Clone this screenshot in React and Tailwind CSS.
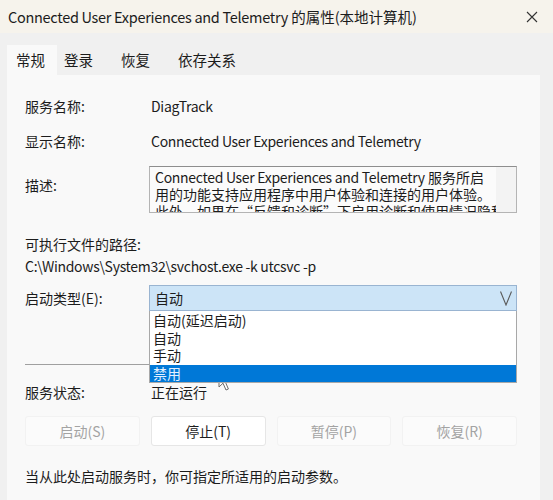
import React from 'react';

const FONT = "font-['Noto_Sans_CJK_SC','Noto_Sans',sans-serif]";
// Latin runs a touch narrower, closer to Segoe UI widths
const LATIN = 'tracking-[-0.3px]';

const TABS = ['常规', '登录', '恢复', '依存关系'];
const OPTIONS = ['自动(延迟启动)', '自动', '手动', '禁用'];
const BUTTONS = [
  { label: '启动(S)', enabled: false },
  { label: '停止(T)', enabled: true },
  { label: '暂停(P)', enabled: false },
  { label: '恢复(R)', enabled: false },
];

function Row({ label, children }) {
  return (
    <div className="flex h-[24px] items-center">
      <div className="w-[125px] shrink-0">{label}</div>
      <div className="pl-[1px]">{children}</div>
    </div>
  );
}

function Cursor() {
  return (
    <svg className="absolute left-[218px] top-[370px]" width="14" height="22" viewBox="0 0 14 22">
      <path d="M1 1 L1 17 L5 13.2 L8 20 L10.4 19 L7.5 12.3 L12.6 12.3 Z" fill="#ffffff" stroke="#6b6b6b" strokeWidth="1" strokeLinejoin="round" />
    </svg>
  );
}

export default function App() {
  return (
    <div className={`relative w-[553px] h-[500px] overflow-hidden bg-[#f0f0f0] text-[14px] text-[#1c1c1c] ${FONT}`}>
      {/* title bar */}
      <div className="flex h-[33px] items-center justify-between bg-[#f6f3ec] pl-[8px] pr-[15px]">
        <span className="whitespace-nowrap text-[14.5px]">
          <span className={LATIN}>Connected User Experiences and Telemetry</span> 的属性(本地计算机)
        </span>
        <svg width="12" height="12" viewBox="0 0 12 12">
          <path d="M1 1 L11 11 M11 1 L1 11" stroke="#333" strokeWidth="1.1" />
        </svg>
      </div>

      {/* tabs */}
      <div className="flex h-[42px] items-end pl-[7px]">
        {TABS.map((t, i) => (
          <div
            key={t}
            className={`flex h-[30px] items-center text-[14.5px] ${
              i === 0 ? 'bg-[#f9f9f9] pl-[9px] pr-[12px]' : 'pl-[7px] pr-[21px]'
            }`}
          >
            {t}
          </div>
        ))}
      </div>

      {/* panel */}
      <div className="ml-[7px] h-[425px] w-[533px] bg-[#f9f9f9] pl-[18px] pr-[23px]">
        <div className="h-[19px]" />
        <Row label="服务名称:"><span className={LATIN}>DiagTrack</span></Row>
        <div className="mt-[11px]">
          <Row label="显示名称:"><span className={LATIN}>Connected User Experiences and Telemetry</span></Row>
        </div>

        <div className="mt-[13px] flex">
          <div className="w-[124px] shrink-0 pt-[9px] leading-[20px]">描述:</div>
          <div className="flex h-[47px] flex-1 overflow-hidden border border-[#b4b4b4] border-t-[#8e8e8e] bg-[#fbfbfb]">
            <div className="flex-1 overflow-hidden pl-[5px] pt-[2px] leading-[17px] whitespace-nowrap">
              <div><span className={LATIN}>Connected User Experiences and Telemetry</span> 服务所启</div>
              <div>用的功能支持应用程序中用户体验和连接的用户体验。</div>
              <div>此外，如果在“反馈和诊断”下启用诊断和使用情况隐私</div>
            </div>
            <div className="w-[20px] shrink-0 bg-[#f3f3f3]" />
          </div>
        </div>

        <div className="mt-[21px] h-[20px] leading-[20px]">可执行文件的路径:</div>
        <div className={`mt-[2px] h-[20px] leading-[20px] ${LATIN}`}>C:\Windows\System32\svchost.exe -k utcsvc -p</div>

        <div className="mt-[9px] flex">
          <div className="flex w-[124px] shrink-0 items-center">启动类型(E):</div>
          <div className="relative flex-1">
            <div className="flex h-[26px] items-center justify-between border border-[#99b4d1] bg-[#cce4f7] pl-[5px] pr-[4px]">
              <span>自动</span>
              <svg width="12" height="15" viewBox="0 0 12 15">
                <path d="M0.5 0.5 L6 14 L11.5 0.5" fill="none" stroke="#5a5a5a" strokeWidth="1.1" />
              </svg>
            </div>
            <div className="absolute left-0 right-0 top-full z-10 border border-t-0 border-[#a8a8a8] bg-white pt-[1px]">
              {OPTIONS.map((o, i) => (
                <div
                  key={o}
                  className={`flex h-[17.5px] items-center pl-[3px] leading-[17px] ${
                    i === 3 ? 'bg-[#0078d7] text-[#e4f0ff]' : ''
                  }`}
                >
                  {o}
                </div>
              ))}
            </div>
          </div>
        </div>

        <div className="mt-[53px] h-px bg-[#a0a0a0]" />

        <div className="mt-[15px]">
          <Row label="服务状态:">正在运行</Row>
        </div>

        <div className="mt-[12px] grid h-[30px] grid-cols-4 gap-[11px]">
          {BUTTONS.map((b) => (
            <div
              key={b.label}
              className={`flex items-center justify-center rounded-[3px] border ${
                b.enabled
                  ? 'border-[#e6e6e6] bg-white text-[#1c1c1c]'
                  : 'border-[#f2f2f2] bg-[#fbfbfb] text-[#a3a3a3]'
              }`}
            >
              {b.label}
            </div>
          ))}
        </div>

        <div className="mt-[20px] h-[20px] leading-[20px]">当从此处启动服务时，你可指定所适用的启动参数。</div>
      </div>

      <Cursor />
    </div>
  );
}
